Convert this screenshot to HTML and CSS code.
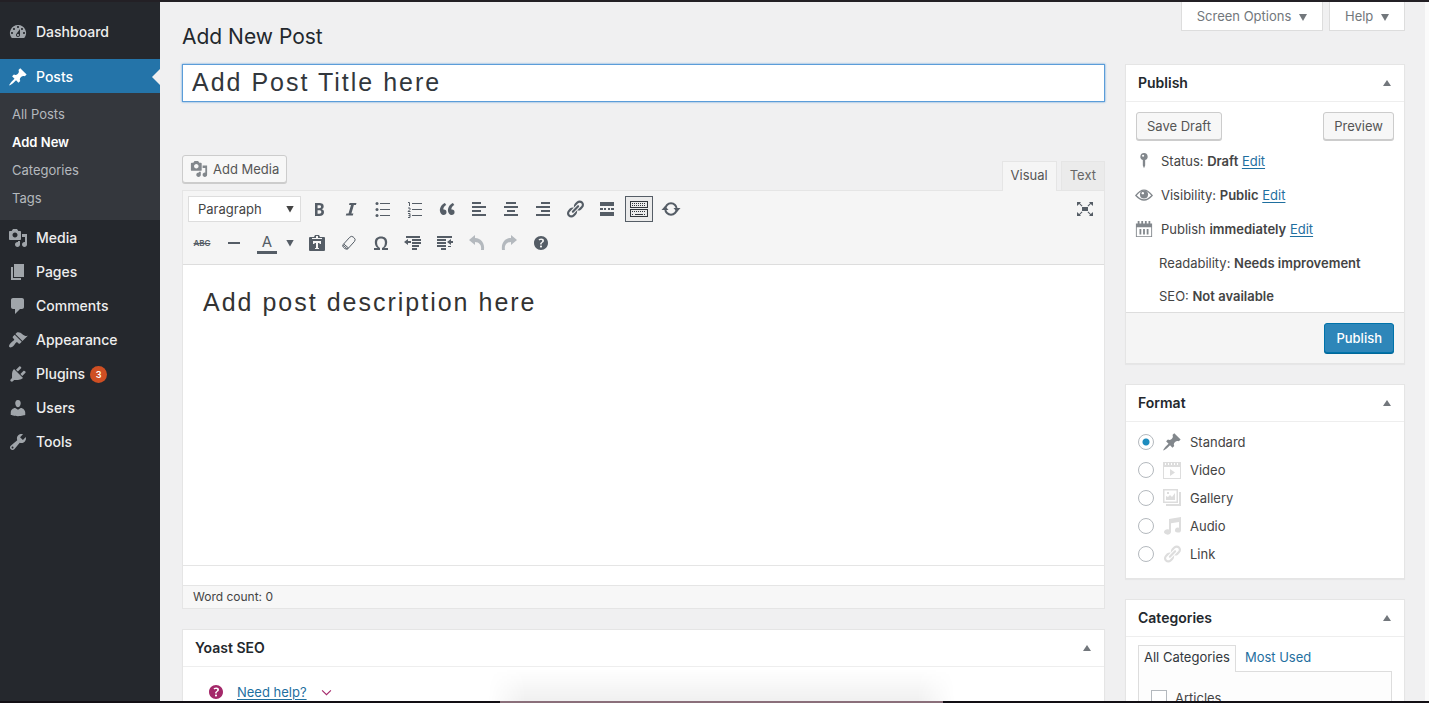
FILE: index.html
```html
<!DOCTYPE html>
<html lang="en">
<head>
    <meta charset="UTF-8">
    <meta name="viewport" content="width=device-width, initial-scale=1.0">
    <title>Add New Post</title>
    <link rel="stylesheet" href="styles.css">
</head>
<body>
    <nav class="sidebar">
        <ul class="menu">
            <li class="menu-first"><a href="#"><svg class="icon" viewBox="0 0 20 20"><path fill-rule="evenodd" d="M3.76 16h12.48A7.998 7.998 0 0 0 10 3a7.998 7.998 0 0 0-6.24 13zM10 4c.55 0 1 .45 1 1s-.45 1-1 1-1-.45-1-1 .45-1 1-1zM6 6c.55 0 1 .45 1 1s-.45 1-1 1-1-.45-1-1 .45-1 1-1zm8 0c.55 0 1 .45 1 1s-.45 1-1 1-1-.45-1-1 .45-1 1-1zm-5.37 5.55L12 7v6c0 1.1-.9 2-2 2s-2-.9-2-2c0-.57.24-1.08.63-1.45zM4 10c.55 0 1 .45 1 1s-.45 1-1 1-1-.45-1-1 .45-1 1-1zm12 0c.55 0 1 .45 1 1s-.45 1-1 1-1-.45-1-1 .45-1 1-1zm-5 3c0-.55-.45-1-1-1s-1 .45-1 1 .45 1 1 1 1-.45 1-1z"/></svg>Dashboard</a></li>
            <li class="current"><a href="#"><svg class="icon" viewBox="0 0 20 20"><path d="M10.44 3.02l1.82-1.82 6.36 6.35-1.83 1.82c-1.05-.68-2.48-.57-3.41.36l-.75.75c-.92.93-1.04 2.35-.35 3.41l-1.83 1.82-2.41-2.41-2.8 2.79c-.42.42-3.38 2.71-3.8 2.29s1.86-3.39 2.28-3.81l2.79-2.79L4.1 9.36l1.83-1.82c1.05.69 2.48.57 3.4-.36l.75-.75c.93-.92 1.05-2.35.36-3.41z"/></svg>Posts</a>
                <ul class="submenu">
                    <li><a href="#">All Posts</a></li>
                    <li><a href="#" class="active">Add New</a></li>
                    <li><a href="#">Categories</a></li>
                    <li><a href="#">Tags</a></li>
                </ul>
            </li>
            <li><a href="#"><svg class="icon" viewBox="0 0 20 20"><path d="M13 11V4c0-.55-.45-1-1-1h-1.67L9 1H5L3.67 3H2c-.55 0-1 .45-1 1v7c0 .55.45 1 1 1h10c.55 0 1-.45 1-1zM7 4.5c1.38 0 2.5 1.12 2.5 2.5S8.38 9.5 7 9.5 4.5 8.38 4.5 7 5.62 4.5 7 4.5zM14 6h5v10.5c0 1.38-1.12 2.5-2.5 2.5S14 17.88 14 16.5s1.12-2.5 2.5-2.5c.17 0 .34.02.5.05V9h-3V6zm-4 8.05V13h2v3.5c0 1.38-1.12 2.5-2.5 2.5S7 17.88 7 16.5 8.12 14 9.5 14c.17 0 .34.02.5.05z"/></svg>Media</a></li>
            <li><a href="#"><svg class="icon" viewBox="0 0 20 20"><path d="M6 15V2h10v13H6zm-1 1h8v2H3V5h2v11z"/></svg>Pages</a></li>
            <li><a href="#"><svg class="icon" viewBox="0 0 20 20"><path d="M5 2h9c1.1 0 2 .9 2 2v7c0 1.1-.9 2-2 2h-2l-5 5v-5H5c-1.1 0-2-.9-2-2V4c0-1.1.9-2 2-2z"/></svg>Comments</a></li>
            <li><a href="#"><svg class="icon" viewBox="0 0 20 20"><path d="M14.48 11.06L7.41 3.99l1.5-1.5c.5-.56 2.3-.47 3.51.32 1.21.8 1.43 1.28 2.91 2.1 1.18.64 2.45 1.26 4.45.85zm-.71.71L6.7 4.7 4.93 6.47c-.39.39-.39 1.02 0 1.41l1.06 1.06c.39.39.39 1.03 0 1.42-.6.6-1.43 1.11-2.21 1.69-.35.26-.7.53-1.01.84C1.43 14.23.4 16.08 1.4 17.07c.99 1 2.84-.03 4.18-1.36.31-.31.58-.66.85-1.02.57-.78 1.08-1.61 1.69-2.21.39-.39 1.02-.39 1.41 0l1.06 1.06c.39.39 1.02.39 1.41 0z"/></svg>Appearance</a></li>
            <li><a href="#"><svg class="icon" viewBox="0 0 20 20"><path d="M13.11 4.36L9.87 7.6 8 5.73l3.24-3.24c.35-.34 1.05-.2 1.56.32.52.51.66 1.21.31 1.55zm-8 1.77l.91-1.12 9.01 9.01-1.19.84c-.71.71-2.63 1.16-3.82 1.16H6.14L4.9 17.26c-.59.59-1.54.59-2.12 0-.59-.58-.59-1.53 0-2.12l1.24-1.24v-3.88c0-1.13.4-3.19 1.09-3.89zm7.26 3.97l3.24-3.24c.34-.35 1.04-.21 1.55.31.52.51.66 1.21.31 1.55l-3.24 3.25z"/></svg>Plugins <span class="count">3</span></a></li>
            <li><a href="#"><svg class="icon" viewBox="0 0 20 20"><path d="M10 9.25c-2.27 0-2.73-3.44-2.73-3.44C7 4.02 7.82 2 9.97 2c2.16 0 2.98 2.02 2.71 3.81 0 0-.41 3.44-2.68 3.44zm0 2.57L12.72 10c2.39 0 4.52 2.33 4.52 4.53v2.49s-3.65 1.13-7.24 1.13c-3.65 0-7.24-1.13-7.24-1.13v-2.49c0-2.25 1.94-4.48 4.47-4.48z"/></svg>Users</a></li>
            <li><a href="#"><svg class="icon" viewBox="0 0 20 20"><path d="M16.68 9.77c-1.34 1.34-3.3 1.67-4.95.99l-5.41 6.52c-.99.99-2.59.99-3.58 0s-.99-2.59 0-3.57l6.52-5.42c-.68-1.65-.35-3.61.99-4.95 1.28-1.28 3.12-1.62 4.72-1.06l-2.89 2.89 2.82 2.82 2.86-2.87c.53 1.58.18 3.39-1.08 4.65zM3.81 16.21c.4.39 1.04.39 1.43 0 .4-.4.4-1.04 0-1.43-.39-.4-1.03-.4-1.43 0-.39.39-.39 1.03 0 1.43z"/></svg>Tools</a></li>
        </ul>
    </nav>

    <div class="content">
        <header class="topbar">
            <h1>Add New Post</h1>
            <div class="screen-links">
                <button type="button">Screen Options <span class="tri"></span></button>
                <button type="button">Help <span class="tri"></span></button>
            </div>
        </header>

        <div class="columns">
            <main class="main">
                <input type="text" class="post-title" aria-label="Post title" value="Add Post Title here">

                <div class="editor-tools">
                    <button type="button" class="button media"><svg class="icon" viewBox="0 0 20 20"><path d="M13 11V4c0-.55-.45-1-1-1h-1.67L9 1H5L3.67 3H2c-.55 0-1 .45-1 1v7c0 .55.45 1 1 1h10c.55 0 1-.45 1-1zM7 4.5c1.38 0 2.5 1.12 2.5 2.5S8.38 9.5 7 9.5 4.5 8.38 4.5 7 5.62 4.5 7 4.5zM14 6h5v10.5c0 1.38-1.12 2.5-2.5 2.5S14 17.88 14 16.5s1.12-2.5 2.5-2.5c.17 0 .34.02.5.05V9h-3V6zm-4 8.05V13h2v3.5c0 1.38-1.12 2.5-2.5 2.5S7 17.88 7 16.5 8.12 14 9.5 14c.17 0 .34.02.5.05z"/></svg>Add Media</button>
                    <div class="editor-tabs">
                        <button type="button" class="active">Visual</button>
                        <button type="button">Text</button>
                    </div>
                </div>

                <div class="editor">
                    <div class="toolbar">
                        <div class="tool-row">
                            <div class="select">
                                <select aria-label="Text style"><option>Paragraph</option><option>Heading 1</option><option>Heading 2</option></select>
                                <span class="tri"></span>
                            </div>
                            <button type="button" aria-label="Bold"><svg class="icon" viewBox="0 0 20 20"><path d="M6 4v13h4.54c1.37 0 2.46-.33 3.26-1 .8-.66 1.2-1.58 1.2-2.77 0-.84-.17-1.51-.51-2.01s-.9-.85-1.67-1.03v-.09c.57-.1 1.02-.4 1.36-.9s.51-1.13.51-1.91c0-1.14-.39-1.98-1.17-2.5C12.75 4.26 11.5 4 9.78 4H6zm2.57 5.15V6.26h1.36c.73 0 1.27.11 1.61.32.34.22.51.58.51 1.07 0 .54-.16.92-.47 1.15s-.82.35-1.51.35h-1.5zm0 2.19h1.6c1.44 0 2.16.53 2.16 1.61 0 .6-.17 1.05-.51 1.34s-.86.43-1.57.43H8.57v-3.38z"/></svg></button>
                            <button type="button" aria-label="Italic"><svg class="icon" viewBox="0 0 20 20"><path d="M15.5 4l-.6 2h-2l-2.500 8.500h2L11.800 16.500H4.800l.6-2h2.100L10 6H8l.6-2z"/></svg></button>
                            <button type="button" aria-label="Bulleted list"><svg class="icon" viewBox="0 0 20 20"><circle cx="4" cy="4.500" r="1.500"/><circle cx="4" cy="10.500" r="1.500"/><circle cx="4" cy="16.500" r="1.500"/><path d="M7 4h10v1H7zM7 10h10v1H7zM7 16h10v1H7z"/></svg></button>
                            <button type="button" aria-label="Numbered list"><svg class="icon" viewBox="0 0 20 20"><path d="M7 4h10v1H7zM7 10h10v1H7zM7 16h10v1H7z"/><path class="thin" d="M3 3.500h1.500V7M3 9h2v1.500L3 12.500h2.500M3 14.500h2v4H3M3.500 16.500H5"/></svg></button>
                            <button type="button" aria-label="Blockquote"><svg class="icon" viewBox="0 0 20 20"><path d="M9.49 13.22c0-.74-.2-1.38-.61-1.9-.62-.78-1.83-.88-2.53-.72-.29-1.65 1.11-3.75 2.92-4.65L7.88 4c-2.73 1.3-5.42 4.28-4.96 8.05C3.21 14.43 4.59 16 6.54 16c.85 0 1.56-.25 2.12-.75s.83-1.18.83-2.03zm8.05 0c0-.74-.2-1.38-.61-1.9-.63-.78-1.83-.88-2.53-.72-.29-1.65 1.11-3.75 2.92-4.65L15.93 4c-2.73 1.3-5.41 4.28-4.95 8.05.29 2.38 1.66 3.95 3.61 3.95.85 0 1.56-.25 2.12-.75s.83-1.18.83-2.03z"/></svg></button>
                            <button type="button" aria-label="Align left"><svg class="icon" viewBox="0 0 20 20"><path d="M3 3h9v2H3zM3 7h14v2H3zM3 11h9v2H3zM3 15h14v2H3z"/></svg></button>
                            <button type="button" aria-label="Align center"><svg class="icon" viewBox="0 0 20 20"><path d="M5 3h10v2H5zM3 7h14v2H3zM6 11h8v2H6zM3 15h14v2H3z"/></svg></button>
                            <button type="button" aria-label="Align right"><svg class="icon" viewBox="0 0 20 20"><path d="M8 3h9v2H8zM3 7h14v2H3zM8 11h9v2H8zM3 15h14v2H3z"/></svg></button>
                            <button type="button" aria-label="Insert link"><svg class="icon" viewBox="0 0 20 20"><path d="M17.74 2.76c1.68 1.69 1.68 4.41 0 6.1l-1.53 1.52c-1.12 1.12-2.7 1.47-4.14 1.09l2.62-2.61.76-.77.76-.76c.84-.84.84-2.2 0-3.04-.84-.85-2.2-.85-3.04 0l-.77.76-3.38 3.38c-.37-1.44-.02-3.02 1.1-4.14l1.52-1.53c1.69-1.68 4.42-1.68 6.1 0zM8.59 13.43l5.34-5.34c.42-.42.42-1.1 0-1.52-.44-.43-1.13-.39-1.53 0l-5.33 5.34c-.42.42-.42 1.1 0 1.52.44.43 1.13.39 1.52 0zm-.76 2.29l4.14-4.15c.38 1.44.03 3.02-1.09 4.14l-1.52 1.53c-1.69 1.68-4.41 1.68-6.1 0-1.68-1.68-1.68-4.42 0-6.1l1.53-1.52c1.12-1.12 2.7-1.47 4.14-1.1l-4.14 4.15c-.85.84-.85 2.2 0 3.05.84.84 2.2.84 3.04 0z"/></svg></button>
                            <button type="button" aria-label="Read more"><svg class="icon" viewBox="0 0 20 20"><path d="M3 3h14v4H3zM3 13h14v4H3zM3 9h3v2H3zM7 9h2v2H7zM11 9h2v2h-2zM14 9h3v2h-3z"/></svg></button>
                            <button type="button" class="pressed" aria-label="Toolbar toggle"><svg class="icon" viewBox="0 0 20 20"><path fill-rule="evenodd" d="M1 2h18v7H1zM2 3v5h16V3zM1 10h18v8H1zM2 11v6h16v-6z"/><path class="dots" d="M3 4.500h14M3 6.500h14M3 12.500h14M3 15.500h2M15 15.500h2"/><path d="M6 15h8v1H6z"/></svg></button>
                            <button type="button" aria-label="Refresh"><svg class="icon" viewBox="0 0 20 20"><path class="line" d="M4.300 10a5.700 5.700 0 0 1 11.400 0M15.700 10a5.700 5.700 0 0 1-11.400 0"/><path d="M12.500 9h7L16 13zM.500 11h7L4 7z"/></svg></button>
                            <button type="button" class="fullscreen" aria-label="Distraction-free writing"><svg class="icon" viewBox="0 0 20 20"><path d="M7 8h6v4H7zM2 3h4L4.900 4.200 7.500 6.800l-.8.8L4.200 5 2 7zM18 3h-4l1.100 1.200-2.600 2.600.8.8L15.800 5 18 7zM2 17h4l-1.100-1.200 2.600-2.600-.8-.8L4.200 15 2 13zM18 17h-4l1.100-1.200-2.600-2.600.8-.8 2.500 2.600 2.200-2z"/></svg></button>
                        </div>
                        <div class="tool-row">
                            <button type="button" class="strike" aria-label="Strikethrough"><s>ABC</s></button>
                            <button type="button" aria-label="Horizontal line"><svg class="icon" viewBox="0 0 20 20"><path d="M4 9h12v2H4z"/></svg></button>
                            <button type="button" class="color" aria-label="Text color"><span class="letter">A</span><span class="tri"></span></button>
                            <button type="button" aria-label="Paste as text"><svg class="icon" viewBox="0 0 20 20"><path fill-rule="evenodd" d="M8 2h4l1 2h4a1 1 0 0 1 1 1v12a1 1 0 0 1-1 1H3a1 1 0 0 1-1-1V5a1 1 0 0 1 1-1h4zM9 3v2h2V3zM5 5v1h10V5zM6 8v3h1.500v-1H9v5H8v1h4v-1h-1v-5h1.500v1H14V8z"/></svg></button>
                            <button type="button" aria-label="Clear formatting"><svg class="icon" viewBox="0 0 20 20"><path class="thin" d="M4.200 11.500l6.500-7.200q1.600-1.700 3.400-.4l1.300 1.200q1.500 1.500.1 3.300l-6.300 7q-1.600 1.500-3.400.2l-1.400-1.300q-1.400-1.300-.2-2.800zM4.800 11l4.900 4.200"/><path class="thin" d="M4.200 12.200l4.300 4"/></svg></button>
                            <button type="button" aria-label="Special character"><svg class="icon" viewBox="0 0 20 20"><path d="M10 5.400c1.270 0 2.240.36 2.910 1.080.66.71 1 1.760 1 3.130 0 1.280-.23 2.370-.69 3.270-.47.89-1.270 1.520-2.220 2.120v2h6v-2h-3.690c.92-.64 1.620-1.340 2.120-2.340.49-1.010.74-2.130.74-3.350 0-1.780-.55-3.190-1.650-4.220S11.920 3.540 10 3.540s-3.430.53-4.520 1.570c-1.100 1.040-1.650 2.440-1.650 4.200 0 1.210.24 2.310.73 3.330.48 1.010 1.190 1.710 2.100 2.360H3v2h6v-2c-.98-.64-1.800-1.280-2.240-2.170-.45-.89-.67-1.960-.67-3.220 0-1.370.33-2.410 1-3.130C7.750 5.760 8.720 5.400 10 5.400z"/></svg></button>
                            <button type="button" aria-label="Decrease indent"><svg class="icon" viewBox="0 0 20 20"><path d="M3 3h14v2H3zM9 6h9v2H9zM9 9h9v2H9zM9 12h7v2H9zM9 15h5v2H9zM7 3h1v2H7zM1 9l4-3v2h3v2H5v2z"/></svg></button>
                            <button type="button" aria-label="Increase indent"><svg class="icon" viewBox="0 0 20 20"><path d="M2 3h15v2H2zM2 6h9v2H2zM2 9h9v2H2zM2 12h9v2H2zM6 15h5v2H6zM12 9l4-3v2h2v2h-2v2zM13 13h3v1h-3z"/></svg></button>
                            <button type="button" class="off" aria-label="Undo"><svg class="icon" viewBox="0 0 20 20"><path d="M8 2v3c6 0 10 5 9 12h-3c1-5-2-8-6-8v3L2 7z"/></svg></button>
                            <button type="button" class="off" aria-label="Redo"><svg class="icon" viewBox="0 0 20 20"><path d="M12 2v3C6 5 2 10 3 17h3c-1-5 2-8 6-8v3l6-5z"/></svg></button>
                            <button type="button" aria-label="Keyboard shortcuts"><svg class="icon" viewBox="0 0 20 20"><path d="M17 10c0-3.870-3.140-7-7-7-3.870 0-7 3.130-7 7s3.130 7 7 7c3.860 0 7-3.130 7-7zm-6.300 1.480H9.140v-.43c0-.38.08-.7.24-.98s.46-.57.88-.89c.41-.29.68-.53.81-.71.14-.18.2-.39.2-.62 0-.25-.09-.44-.28-.58-.19-.13-.45-.19-.79-.19-.58 0-1.250.15-2 .45l-.64-1.280c.87-.49 1.800-.74 2.770-.74.81 0 1.450.2 1.920.58.48.39.71.91.71 1.550 0 .43-.09.8-.29 1.110-.19.32-.57.67-1.110 1.060-.38.28-.61.49-.71.63-.1.15-.15.34-.15.57v.47zm-1.470 2.740c-.18-.17-.27-.42-.27-.73 0-.33.08-.58.26-.75s.43-.25.77-.25c.32 0 .57.09.75.26s.27.42.27.74c0 .3-.09.55-.27.72-.18.18-.43.27-.75.27-.33 0-.58-.09-.76-.26z"/></svg></button>
                        </div>
                    </div>
                    <textarea aria-label="Post content">Add post description here</textarea>
                    <div class="path-bar"></div>
                    <div class="status-bar">Word count: 0</div>
                </div>

                <section class="box">
                    <h2>Yoast SEO <span class="up"></span></h2>
                    <div class="yoast">
                        <svg class="icon" viewBox="0 0 20 20"><path d="M17 10c0-3.870-3.140-7-7-7-3.870 0-7 3.130-7 7s3.130 7 7 7c3.860 0 7-3.130 7-7zm-6.300 1.480H9.140v-.43c0-.38.08-.7.24-.98s.46-.57.88-.89c.41-.29.68-.53.81-.71.14-.18.2-.39.2-.62 0-.25-.09-.44-.28-.58-.19-.13-.45-.19-.79-.19-.58 0-1.250.15-2 .45l-.64-1.280c.87-.49 1.800-.74 2.770-.74.81 0 1.450.2 1.920.58.48.39.71.91.71 1.550 0 .43-.09.8-.29 1.110-.19.32-.57.67-1.110 1.060-.38.28-.61.49-.71.63-.1.15-.15.34-.15.57v.47zm-1.470 2.740c-.18-.17-.27-.42-.27-.73 0-.33.08-.58.26-.75s.43-.25.77-.25c.32 0 .57.09.75.26s.27.42.27.74c0 .3-.09.55-.27.72-.18.18-.43.27-.75.27-.33 0-.58-.09-.76-.26z"/></svg>
                        <a href="#">Need help?</a>
                        <svg class="chevron" viewBox="0 0 10 10"><path d="M1 3l4 4 4-4"/></svg>
                    </div>
                </section>
            </main>

            <aside class="side">
                <section class="box">
                    <h2>Publish <span class="up"></span></h2>
                    <div class="publish-buttons">
                        <button type="button" class="button">Save Draft</button>
                        <button type="button" class="button">Preview</button>
                    </div>
                    <ul class="publish-list">
                        <li><svg class="icon" viewBox="0 0 20 20"><path fill-rule="evenodd" d="M10 1a4 4 0 0 1 1.300 7.800V15L10 18l-1.300-3V8.800A4 4 0 0 1 10 1zM9 3a1.200 1.200 0 1 0 0 2.400A1.200 1.200 0 0 0 9 3z"/></svg><p>Status: <b>Draft</b> <a href="#">Edit</a></p></li>
                        <li><svg class="icon" viewBox="0 0 20 20"><path class="eye" d="M1 10.500q9-12 18 0-9 10-18 0z"/><circle cx="10" cy="9.500" r="4.500"/><circle cx="8.700" cy="8" r="1.300" fill="#fff"/></svg><p>Visibility: <b>Public</b> <a href="#">Edit</a></p></li>
                        <li><svg class="icon" viewBox="0 0 20 20"><path fill-rule="evenodd" d="M1 4h2V1h2v3h2V1h2v3h2V1h2v3h2V1h2v3h2v15H1zM2 8v10h16V8zM5 10h2v6H5zM9 10h2v6H9zM13 10h2v6h-2z"/></svg><p>Publish <b>immediately</b> <a href="#">Edit</a></p></li>
                        <li class="plain"><p>Readability: <b>Needs improvement</b></p></li>
                        <li class="plain"><p>SEO: <b>Not available</b></p></li>
                    </ul>
                    <div class="publish-footer"><button type="submit" class="button primary">Publish</button></div>
                </section>

                <section class="box">
                    <h2>Format <span class="up"></span></h2>
                    <div class="formats">
                        <label><input type="radio" name="format" checked><svg class="icon dark" viewBox="0 0 20 20"><path d="M10.44 3.02l1.82-1.82 6.36 6.35-1.83 1.82c-1.05-.68-2.48-.57-3.41.36l-.75.75c-.92.93-1.04 2.35-.35 3.41l-1.83 1.82-2.41-2.41-2.8 2.79c-.42.42-3.38 2.71-3.8 2.29s1.86-3.39 2.28-3.81l2.79-2.79L4.1 9.36l1.83-1.82c1.05.69 2.48.57 3.4-.36l.75-.75c.93-.92 1.05-2.35.36-3.41z"/></svg>Standard</label>
                        <label><input type="radio" name="format"><svg class="icon" viewBox="0 0 20 20"><path fill-rule="evenodd" d="M1 2h18v17H1zM2 7v11h16V7zM3 3v2h1V3zM6 3v2h1V3zM9 3v2h1V3zM12 3v2h1V3zM15 3v2h1V3zM8 9l5 3.500L8 16z"/></svg>Video</label>
                        <label><input type="radio" name="format"><svg class="icon" viewBox="0 0 20 20"><path fill-rule="evenodd" d="M1 1h15v14H1zM2.500 2.500v11h12v-11zM17 4h2v14H4v-2h13zM4 12V8l2 1 2-2 2 2 3-4v7zM5 4h2v2H5z"/></svg>Gallery</label>
                        <label><input type="radio" name="format"><svg class="icon" viewBox="0 0 20 20"><path fill-rule="evenodd" d="M7 3l12-2v13a3 2.500 0 1 1-2-2.300V6L9 7.300V16a3.500 2.700 0 1 1-2-2.500z"/></svg>Audio</label>
                        <label><input type="radio" name="format"><svg class="icon" viewBox="0 0 20 20"><path d="M17.74 2.76c1.68 1.69 1.68 4.41 0 6.1l-1.53 1.52c-1.12 1.12-2.7 1.47-4.14 1.09l2.62-2.61.76-.77.76-.76c.84-.84.84-2.2 0-3.04-.84-.85-2.2-.85-3.04 0l-.77.76-3.38 3.38c-.37-1.44-.02-3.02 1.1-4.14l1.52-1.53c1.69-1.68 4.42-1.68 6.1 0zM8.59 13.43l5.34-5.34c.42-.42.42-1.1 0-1.52-.44-.43-1.13-.39-1.53 0l-5.33 5.34c-.42.42-.42 1.1 0 1.52.44.43 1.13.39 1.52 0zm-.76 2.29l4.14-4.15c.38 1.44.03 3.02-1.09 4.14l-1.52 1.53c-1.69 1.68-4.41 1.68-6.1 0-1.68-1.68-1.68-4.42 0-6.1l1.53-1.52c1.12-1.12 2.7-1.47 4.14-1.1l-4.14 4.15c-.85.84-.85 2.2 0 3.05.84.84 2.2.84 3.04 0z"/></svg>Link</label>
                    </div>
                </section>

                <section class="box">
                    <h2>Categories <span class="up"></span></h2>
                    <div class="cats">
                        <div class="cat-tabs">
                            <a href="#" class="active">All Categories</a>
                            <a href="#">Most Used</a>
                        </div>
                        <div class="cat-panel">
                            <label><input type="checkbox">Articles</label>
                        </div>
                    </div>
                </section>
            </aside>
        </div>
    </div>
    <div class="dock"></div>
</body>
</html>
```
FILE: styles.css
```css
* {
    box-sizing: border-box;
}
body {
    margin: 0;
    height: 100vh;
    overflow: hidden;
    display: flex;
    background: #f0f0f1;
    border-top: 2px solid #232025;
    border-bottom: 2px solid #120f14;
    color: #444;
    font-family: Inter, "Liberation Sans", sans-serif;
    font-size: 13px;
    line-height: 20px;
}
h1, h2, p, ul {
    margin: 0;
    padding: 0;
}
ul {
    list-style: none;
}
button, input, select, textarea {
    font: inherit;
    color: inherit;
    margin: 0;
}
a {
    color: #1f6f9f;
    text-underline-offset: 2px;
}
b {
    font-weight: 600;
}
.icon {
    width: 20px;
    height: 20px;
    fill: currentColor;
    flex: none;
}
.thin {
    fill: none;
    stroke: currentColor;
}
.line {
    fill: none;
    stroke: currentColor;
    stroke-width: 2;
}
.eye {
    fill: none;
    stroke: currentColor;
    stroke-width: 1.5;
}
.dots {
    stroke: currentColor;
    stroke-dasharray: 1 1;
}
.tri, .up {
    display: inline-block;
    width: 8px;
    height: 7px;
    background: currentColor;
    clip-path: polygon(0 0, 100% 0, 50% 100%);
}
.up {
    height: 6px;
    color: #72777c;
    clip-path: polygon(50% 0, 100% 100%, 0 100%);
}

/* admin menu */
.sidebar {
    width: 160px;
    flex: none;
    background: #25282d;
}
.menu a {
    display: flex;
    align-items: center;
    gap: 8px;
    height: 34px;
    padding: 2px 0 0 8px;
    color: #eee;
    font-size: 14px;
    font-weight: 500;
    text-decoration: none;
}
.menu .icon {
    color: #a0a5aa;
}
.menu-first {
    padding: 12px 0 11px;
}
.current > a {
    position: relative;
    background: #2474a9;
    color: #fff;
}
.current > a .icon {
    color: #fff;
}
.current > a::after {
    content: "";
    position: absolute;
    right: 0;
    width: 8px;
    height: 16px;
    background: #f0f0f1;
    clip-path: polygon(100% 0, 100% 100%, 0 50%);
}
.menu .submenu {
    padding: 7px 0 8px;
    background: #34373d;
}
.menu .submenu a {
    height: 28px;
    padding: 0 12px;
    color: #b4b9be;
    font-size: 13px;
    font-weight: 400;
}
.menu .submenu .active {
    color: #fff;
    font-weight: 600;
}
.count {
    width: 17px;
    height: 17px;
    margin-left: -3px;
    border-radius: 50%;
    background: #cf4f23;
    color: #fff;
    font-size: 9px;
    font-weight: 600;
    line-height: 17px;
    text-align: center;
}

/* page */
.content {
    flex: 1;
    min-width: 0;
    padding: 0 20px 0 22px;
    border-right: 4px solid #fbfbfb;
}
.topbar {
    display: flex;
    justify-content: space-between;
    align-items: flex-start;
    height: 62px;
}
h1 {
    padding-top: 20px;
    color: #23282d;
    font-size: 21px;
    font-weight: 400;
    line-height: 30px;
}
.screen-links {
    display: flex;
    gap: 6px;
}
.screen-links button {
    height: 29px;
    padding: 0 15px;
    border: 1px solid #ddd;
    border-top: 0;
    background: #fff;
    color: #72777c;
}
.screen-links .tri {
    margin-left: 4px;
}
.columns {
    display: flex;
    gap: 20px;
}
.main {
    flex: 1;
    min-width: 0;
}
.side {
    width: 280px;
    flex: none;
}
.post-title {
    display: block;
    width: 100%;
    height: 38px;
    padding: 0 9px 2px;
    border: 1px solid #5b9dd9;
    background: #fff;
    box-shadow: 0 0 2px #5b9dd9;
    color: #32373c;
    font-family: "Liberation Sans", Arial, sans-serif;
    font-size: 25px;
    letter-spacing: 2px;
}
.button {
    height: 28px;
    padding: 0 10px;
    border: 1px solid #ccc;
    border-radius: 3px;
    background: #f7f7f7;
    box-shadow: 0 1px 0 #ccc;
    color: #555;
}
.primary {
    height: 30px;
    padding: 0 11px;
    border-color: #0073aa;
    background: #2e86b9;
    box-shadow: 0 1px 0 #006799;
    color: #fff;
    font-weight: 500;
}
.editor-tools {
    display: flex;
    justify-content: space-between;
    align-items: flex-end;
    padding-top: 53px;
}
.media {
    display: flex;
    align-items: center;
    gap: 5px;
    margin-bottom: 7px;
    padding: 0 7px;
}
.media .icon {
    width: 18px;
    height: 18px;
    color: #82878c;
}
.editor-tabs {
    display: flex;
    gap: 4px;
}
.editor-tabs button {
    height: 29px;
    padding: 0 8px 2px;
    border: 1px solid #e5e5e5;
    border-bottom: 0;
    background: #ebebeb;
    color: #666;
}
.editor-tabs .active {
    margin-bottom: -1px;
    height: 30px;
    padding-bottom: 3px;
    background: #f5f5f5;
    color: #555;
    position: relative;
}

/* editor */
.editor {
    border: 1px solid #e5e5e5;
    background: #fff;
}
.toolbar {
    display: flex;
    flex-direction: column;
    gap: 6px;
    padding: 4px 5px 7px;
    border-bottom: 1px solid #ddd;
    background: #f5f5f5;
}
.tool-row {
    display: flex;
    align-items: center;
    gap: 4px;
}
.tool-row button {
    display: flex;
    align-items: center;
    justify-content: center;
    width: 28px;
    height: 28px;
    padding: 0;
    border: 1px solid transparent;
    background: none;
    color: #555d66;
}
.tool-row .pressed {
    height: 26px;
    border-color: #555d66;
    background: #ebebeb;
    color: #32373c;
}
.tool-row .fullscreen {
    margin-left: auto;
}
.tool-row .off {
    color: #b4b9be;
}
.tool-row .strike {
    font-size: 8px;
    font-weight: 600;
}
.tool-row .color {
    width: 47px;
    gap: 9px;
}
.letter {
    width: 20px;
    border-bottom: 3px solid #555d66;
    font-size: 15px;
    line-height: 18px;
}
.select {
    display: flex;
    align-items: center;
    width: 113px;
    border: 1px solid #ddd;
    background: #fff;
}
.select select {
    flex: 1;
    min-width: 0;
    height: 24px;
    padding: 0 0 0 9px;
    border: 0;
    background: none;
    appearance: none;
}
.select .tri {
    margin-right: 6px;
}
.editor textarea {
    display: block;
    width: 100%;
    height: 300px;
    padding: 20px;
    border: 0;
    resize: none;
    color: #333;
    font-family: "Liberation Sans", Arial, sans-serif;
    font-size: 25px;
    line-height: 34px;
    letter-spacing: 2px;
}
.path-bar {
    height: 21px;
    border-top: 1px solid #e5e5e5;
    border-bottom: 1px solid #e5e5e5;
}
.status-bar {
    height: 22px;
    padding-left: 10px;
    background: #f7f7f7;
    font-size: 12px;
    line-height: 22px;
}

/* boxes */
.box {
    margin-bottom: 20px;
    border: 1px solid #e5e5e5;
    background: #fff;
    box-shadow: 0 1px 1px rgba(0, 0, 0, 0.04);
}
.main .box {
    margin-top: 20px;
}
.box h2 {
    display: flex;
    align-items: center;
    justify-content: space-between;
    height: 37px;
    padding: 0 13px 0 12px;
    border-bottom: 1px solid #eee;
    color: #23282d;
    font-size: 14px;
    font-weight: 600;
}
.yoast {
    display: flex;
    align-items: center;
    gap: 11px;
    height: 50px;
    padding-left: 23px;
}
.yoast .icon {
    color: #a4286a;
}
.chevron {
    width: 11px;
    height: 11px;
    margin-left: 3px;
    fill: none;
    stroke: #a4286a;
}
.publish-buttons {
    display: flex;
    justify-content: space-between;
    padding: 10px 10px 4px;
}
.publish-list li {
    display: flex;
    align-items: center;
    gap: 8px;
    height: 34px;
    padding-left: 9px;
}
.publish-list .icon {
    width: 18px;
    height: 18px;
    color: #82878c;
}
.publish-list .plain {
    height: 33px;
    padding-left: 33px;
}
.publish-footer {
    display: flex;
    justify-content: flex-end;
    padding: 10px;
    border-top: 1px solid #ddd;
    background: #f5f5f5;
}
.formats {
    padding: 6px 12px 10px;
}
.formats label {
    display: flex;
    align-items: center;
    gap: 8px;
    height: 28px;
}
.formats .icon {
    color: #ddd;
}
.formats .dark {
    color: #82878c;
}
.formats input, .cat-panel input {
    width: 16px;
    height: 16px;
    border: 1px solid #b4b9be;
    border-radius: 50%;
    background: #fff;
    appearance: none;
}
.formats input:checked {
    background: radial-gradient(#1e8cbe 3px, #fff 4px);
}
.cats {
    padding: 8px 12px;
}
.cat-tabs {
    display: flex;
}
.cat-tabs a {
    height: 26px;
    padding: 0 9px;
    line-height: 25px;
    text-decoration: none;
}
.cat-tabs .active {
    position: relative;
    height: 27px;
    margin-bottom: -1px;
    padding: 0 5px;
    border: 1px solid #ddd;
    border-bottom: 0;
    background: #fdfdfd;
    color: #32373c;
    line-height: 23px;
}
.cat-panel {
    padding: 16px 12px;
    border: 1px solid #ddd;
    background: #fdfdfd;
}
.cat-panel label {
    display: flex;
    align-items: center;
    gap: 8px;
}
.cat-panel input {
    border-radius: 0;
}

/* shade of the dock along the bottom edge */
.dock {
    position: fixed;
    bottom: 0;
    left: 35%;
    width: 31%;
    border-bottom: 2px solid #8a6f7a;
    pointer-events: none;
}
.dock::before {
    content: "";
    display: block;
    height: 32px;
    margin: 0 -12px;
    background: linear-gradient(to bottom, rgba(0, 0, 0, 0), rgba(0, 0, 0, 0.06));
    mask-image: linear-gradient(to right, transparent, #000 8%, #000 92%, transparent);
}
```
